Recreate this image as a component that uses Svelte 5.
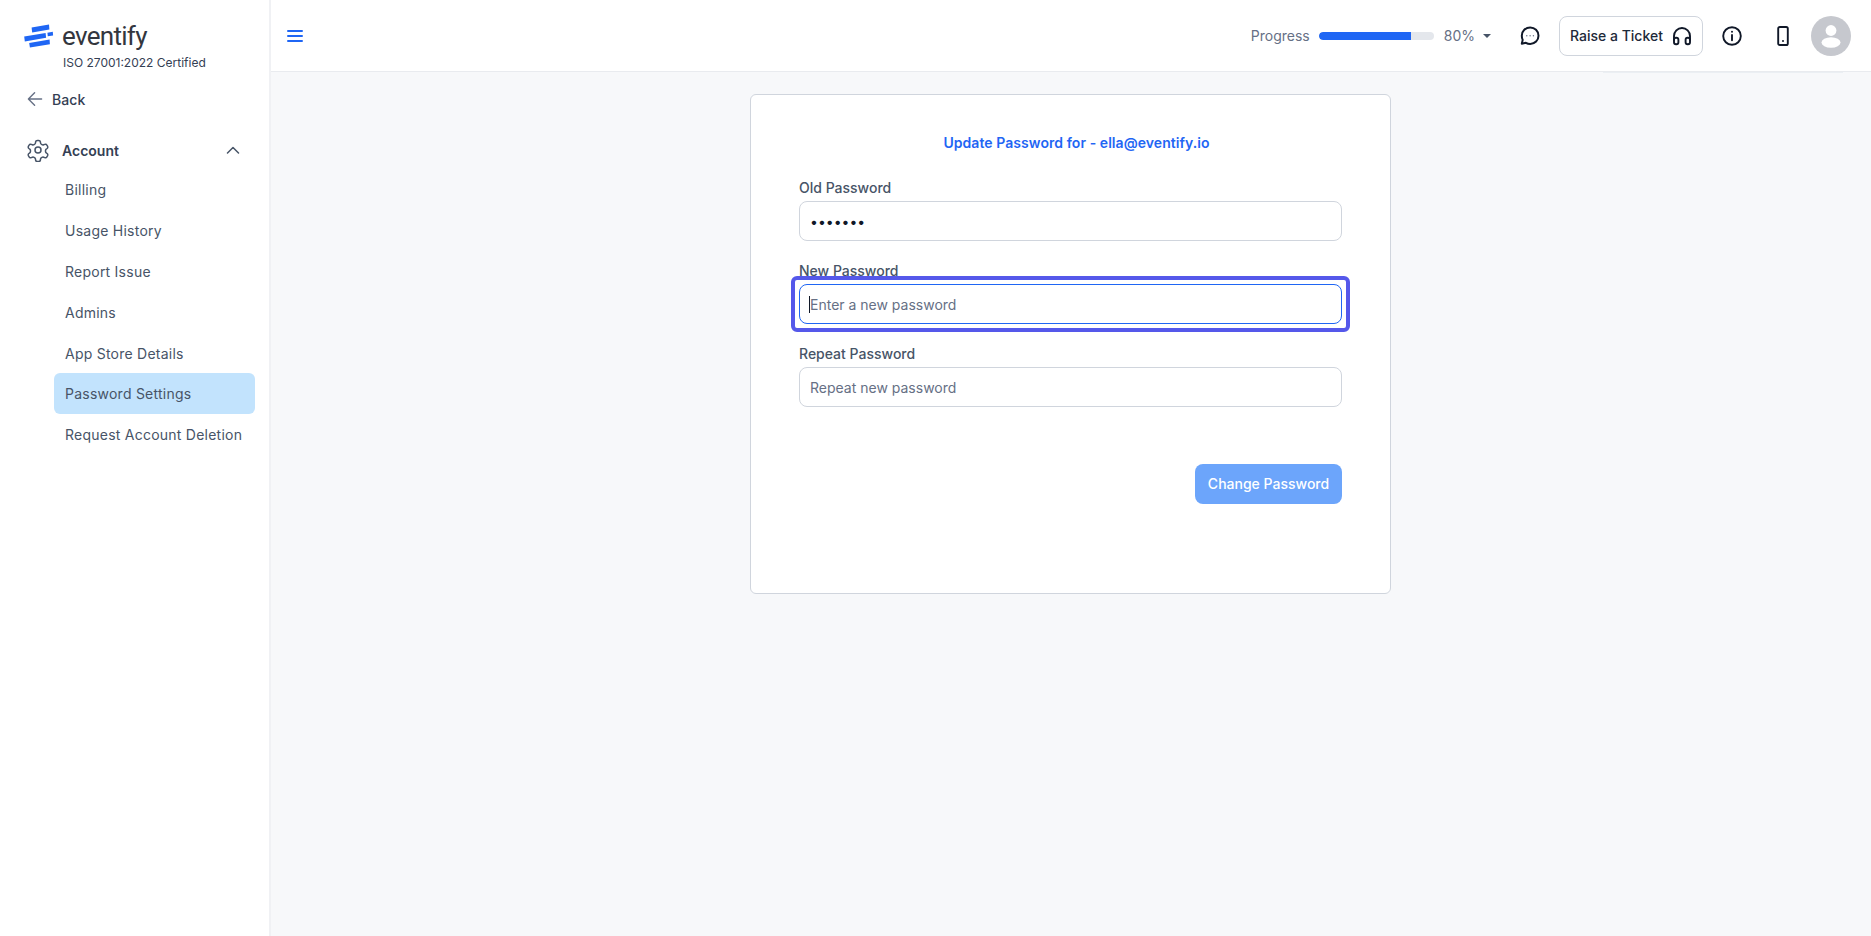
<script>
  const subItems = [
    'Billing',
    'Usage History',
    'Report Issue',
    'Admins',
    'App Store Details',
    'Password Settings',
    'Request Account Deletion'
  ];
  const activeItem = 'Password Settings';
  const progress = 80;
</script>

<div class="page">
  <aside class="sidebar">
    <div class="brand">
      <div class="brand-row">
        <svg class="logo" width="30" height="24" viewBox="0 0 30 24">
          <path d="M7.600 3.600 25 .6l.4 4.900-17.200 3z" fill="#1f66f4" />
          <path d="M.2 12.600l21.400-3.700.5 4.900L.8 17.400z" fill="#1f66f4" />
          <path d="M23.400 8.700l5.400-.9.3 3.600-5.300.9z" fill="#1f66f4" />
          <path d="M5.200 19l20.400-3.400.3 4.600L5.900 23.600z" fill="#1f66f4" />
        </svg>
        <span class="wordmark">eventify</span>
      </div>
      <div class="cert">ISO 27001:2022 Certified</div>
    </div>

    <div class="back">
      <svg width="16" height="16" viewBox="0 0 16 16" fill="none" stroke="#667085" stroke-width="1.400" stroke-linecap="round" stroke-linejoin="round">
        <path d="M14.600 8H1.600M7.600 1.800 1.400 8l6.200 6.200" />
      </svg>
      <span>Back</span>
    </div>

    <div class="section">
      <svg width="24" height="24" viewBox="0 0 24 24" fill="none" stroke="#475467" stroke-width="1.500" stroke-linecap="round" stroke-linejoin="round">
        <path d="M9.600 3.900c.1-.9.9-1.500 1.800-1.500h1.200c.9 0 1.700.6 1.800 1.500l.1 1.100c.1.6.5 1.100 1 1.400l.5.3c.5.3 1.200.3 1.700.1l1-.4c.8-.3 1.800 0 2.200.8l.6 1c.4.8.3 1.700-.4 2.300l-.9.7c-.5.4-.7.9-.7 1.500v.6c0 .6.2 1.100.7 1.500l.9.7c.7.6.8 1.500.4 2.300l-.6 1c-.4.8-1.400 1.100-2.200.8l-1-.4c-.5-.2-1.200-.2-1.700.1l-.5.3c-.5.3-.9.8-1 1.400l-.1 1.100c-.1.9-.9 1.500-1.800 1.500h-1.200c-.9 0-1.700-.6-1.800-1.500l-.1-1.100c-.1-.6-.5-1.100-1-1.400l-.5-.3c-.5-.3-1.200-.3-1.700-.1l-1 .4c-.8.3-1.800 0-2.200-.8l-.6-1c-.4-.8-.3-1.700.4-2.300l.9-.7c.5-.4.7-.9.7-1.500v-.6c0-.6-.2-1.100-.7-1.500l-.9-.7c-.7-.6-.8-1.500-.4-2.300l.6-1c.4-.8 1.400-1.100 2.200-.8l1 .4c.5.2 1.200.2 1.700-.1l.5-.3c.5-.3.9-.8 1-1.400z" />
        <circle cx="12" cy="12" r="3" />
      </svg>
      <span class="section-name">Account</span>
      <svg class="chev" width="14" height="8" viewBox="0 0 14 8" fill="none" stroke="#475467" stroke-width="1.500" stroke-linecap="round" stroke-linejoin="round">
        <path d="M1.500 7 7 1.500 12.500 7" />
      </svg>
    </div>

    <nav class="subnav">
      {#each subItems as item}
        <div class="subitem" class:active={item === activeItem}>{item}</div>
      {/each}
    </nav>
  </aside>

  <div class="main">
    <header class="topbar">
      <svg class="burger" width="16" height="14" viewBox="0 0 16 14" fill="none" stroke="#1f66f4" stroke-width="2" stroke-linecap="round">
        <path d="M1 2h14M1 7h14M1 12h14" />
      </svg>

      <div class="right">
        <span class="progress-label">Progress</span>
        <div class="bar"><div class="bar-fill" style="width: {progress}%"></div></div>
        <span class="progress-label pct">{progress}%</span>
        <span class="tri"></span>

        <svg class="chat" width="20" height="20" viewBox="0 0 20 20" fill="none" stroke="#101828" stroke-width="2" stroke-linecap="round" stroke-linejoin="round">
          <path d="M10.200 1.400c4.500 0 8.300 3.700 8.300 8.300s-3.700 8.300-8.300 8.300c-1.600 0-3-.4-4.300-1.200l-4.100 1 .9-3.900C2 12.500 1.800 11 1.800 9.700c0-4.600 3.800-8.300 8.400-8.300z" />
          <circle cx="6.800" cy="9.800" r=".7" fill="#667085" stroke="none" />
          <circle cx="10.100" cy="9.800" r=".7" fill="#667085" stroke="none" />
          <circle cx="13.400" cy="9.800" r=".7" fill="#667085" stroke="none" />
        </svg>

        <div class="ticket">
          <span>Raise a Ticket</span>
          <svg width="20" height="20" viewBox="0 0 20 20" fill="none" stroke="#101828" stroke-width="1.900" stroke-linecap="round" stroke-linejoin="round">
            <path d="M2 14V10a8 8 0 0 1 16 0v4" />
            <rect x="2" y="11.800" width="4.400" height="6.400" rx="2" />
            <rect x="13.600" y="11.800" width="4.400" height="6.400" rx="2" />
          </svg>
        </div>

        <svg class="info" width="20" height="20" viewBox="0 0 20 20" fill="none" stroke="#101828" stroke-width="1.900" stroke-linecap="round">
          <circle cx="10" cy="10" r="8.800" />
          <path d="M10 9v5.200" />
          <circle cx="10" cy="5.800" r="1" fill="#101828" stroke="none" />
        </svg>

        <svg class="phone" width="12" height="20" viewBox="0 0 12 20" fill="none" stroke="#101828" stroke-width="1.900">
          <rect x="1.200" y="1" width="9.600" height="18" rx="1.600" />
          <circle cx="6" cy="15" r="1" fill="#101828" stroke="none" />
        </svg>

        <svg class="avatar" width="40" height="40" viewBox="0 0 40 40">
          <circle cx="20" cy="20" r="20" fill="#c6c8ce" />
          <circle cx="20" cy="14.500" r="5.400" fill="#fff" />
          <ellipse cx="20" cy="26.500" rx="9.500" ry="5.200" fill="#fff" />
        </svg>
      </div>
    </header>

    <main class="content">
      <div class="card">
        <h1 class="title">Update Password for - ella@eventify.io</h1>

        <div class="field">
          <label for="old">Old Password</label>
          <input id="old" type="password" value="1234567" />
        </div>

        <div class="field">
          <label for="new">New Password</label>
          <div class="focus-wrap">
            <input id="new" class="focused" type="password" placeholder="Enter a new password" />
            <span class="caret"></span>
          </div>
        </div>

        <div class="field">
          <label for="repeat">Repeat Password</label>
          <input id="repeat" type="password" placeholder="Repeat new password" />
        </div>

        <div class="actions">
          <button class="submit" type="button">Change Password</button>
        </div>
      </div>
    </main>
  </div>
</div>

<style>
  :global(body) {
    margin: 0;
    font-family: Inter, "Liberation Sans", sans-serif;
    background: #f7f8fa;
  }

  .page {
    display: flex;
    height: 936px;
    overflow: hidden;
  }

  .sidebar {
    width: 269px;
    flex: none;
    background: #fff;
    border-right: 2px solid #f0f1f4;
  }

  .brand {
    padding: 22px 0 0 24px;
    height: 58px;
  }
  .brand-row {
    display: flex;
    align-items: center;
    gap: 8px;
    height: 28px;
  }
  .logo {
    flex: none;
  }
  .wordmark {
    font-family: Roboto, sans-serif;
    font-size: 26px;
    line-height: 28px;
    font-weight: 400;
    letter-spacing: -0.7px;
    color: #33363e;
  }
  .cert {
    margin: 5px 0 0 39px;
    font-size: 12px;
    line-height: 16px;
    color: #344054;
  }

  .back {
    display: flex;
    align-items: center;
    gap: 9px;
    height: 24px;
    margin-top: 7px;
    padding-left: 27px;
    font-size: 14px;
    font-weight: 500;
    letter-spacing: 0.1px;
    color: #344054;
  }

  .section {
    display: flex;
    align-items: center;
    height: 30px;
    margin-top: 24px;
    padding-left: 26px;
    font-size: 14px;
    font-weight: 600;
    color: #344054;
  }
  .section-name {
    margin-left: 12px;
  }
  .chev {
    margin-left: 107px;
  }

  .subnav {
    margin: 4.5px 0 0 54px;
    width: 201px;
  }
  .subitem {
    display: flex;
    align-items: center;
    height: 40.8px;
    padding-left: 11px;
    border-radius: 6px;
    font-size: 14px;
    letter-spacing: 0.24px;
    color: #475467;
  }
  .subitem.active {
    background: #c2e3fd;
  }

  .main {
    flex: 1;
    min-width: 0;
    display: flex;
    flex-direction: column;
  }

  .topbar {
    position: relative;
    height: 71px;
    flex: none;
    display: flex;
    align-items: center;
    background: #fff;
    border-bottom: 1px solid #e9ebef;
    padding: 0 20px 0 16px;
  }
  /* faint strip under the right part of the bar */
  .topbar::after {
    content: '';
    position: absolute;
    top: 100%;
    right: 28px;
    width: 240px;
    height: 1px;
    margin-top: 1px;
    background: #ebeff3;
  }
  .burger {
    flex: none;
  }
  .right {
    margin-left: auto;
    display: flex;
    align-items: center;
    font-size: 14px;
  }
  .progress-label {
    color: #667085;
  }
  .bar {
    width: 115px;
    height: 8px;
    margin-left: 9px;
    border-radius: 4px;
    background: #e4e7ec;
    overflow: hidden;
  }
  .bar-fill {
    height: 100%;
    border-radius: 4px 0 0 4px;
    background: #1f66f4;
  }
  .pct {
    margin-left: 10px;
  }
  .tri {
    margin-left: 8px;
    width: 0;
    height: 0;
    border-left: 4px solid transparent;
    border-right: 4px solid transparent;
    border-top: 4px solid #475467;
  }
  .chat {
    margin-left: 29px;
  }
  .ticket {
    display: flex;
    align-items: center;
    gap: 9px;
    box-sizing: border-box;
    width: 144px;
    height: 40px;
    margin-left: 19px;
    padding-left: 10px;
    border: 1px solid #d0d5dd;
    border-radius: 8px;
    color: #1d2939;
    font-weight: 500;
  }
  .info {
    margin-left: 19px;
  }
  .phone {
    margin-left: 35px;
  }
  .avatar {
    margin-left: 22px;
  }

  .content {
    flex: 1;
    padding: 22px 1px 0 0;
    display: flex;
    justify-content: center;
  }

  .card {
    box-sizing: border-box;
    width: 641px;
    height: 500px;
    padding: 36px 48px 0;
    background: #fff;
    border: 1px solid #d0d5dd;
    border-radius: 6px;
  }
  .title {
    margin: 0 0 23px;
    padding-left: 12px;
    text-align: center;
    font-size: 14px;
    line-height: 24px;
    font-weight: 600;
    letter-spacing: 0.06px;
    color: #1f66f4;
  }

  .field {
    margin-bottom: 20px;
  }
  .field label {
    display: block;
    height: 20px;
    margin-bottom: 3px;
    line-height: 20px;
    font-size: 14px;
    font-weight: 500;
    color: #475467;
  }
  .field input {
    display: block;
    box-sizing: border-box;
    width: 100%;
    height: 40px;
    padding: 0 10px;
    border: 1px solid #d0d5dd;
    border-radius: 8px;
    background: #fff;
    font-family: inherit;
    font-size: 14px;
    color: #101828;
    outline: none;
  }
  .field input::placeholder {
    color: #667085;
    opacity: 1;
  }
  .focus-wrap {
    position: relative;
  }
  .focus-wrap::after {
    content: '';
    position: absolute;
    inset: -8px;
    border: 4px solid #5558ea;
    border-radius: 6px;
    pointer-events: none;
  }
  .field input.focused {
    border-color: #1f66f4;
  }
  .caret {
    position: absolute;
    left: 10px;
    top: 12px;
    width: 1px;
    height: 17px;
    background: #101828;
  }

  .actions {
    display: flex;
    justify-content: flex-end;
    margin-top: 57px;
  }
  .submit {
    width: 147px;
    height: 40px;
    padding: 0 0 2px;
    border: none;
    border-radius: 8px;
    background: #6ca5fb;
    color: #fff;
    font-family: inherit;
    font-size: 14px;
    font-weight: 500;
  }
</style>
